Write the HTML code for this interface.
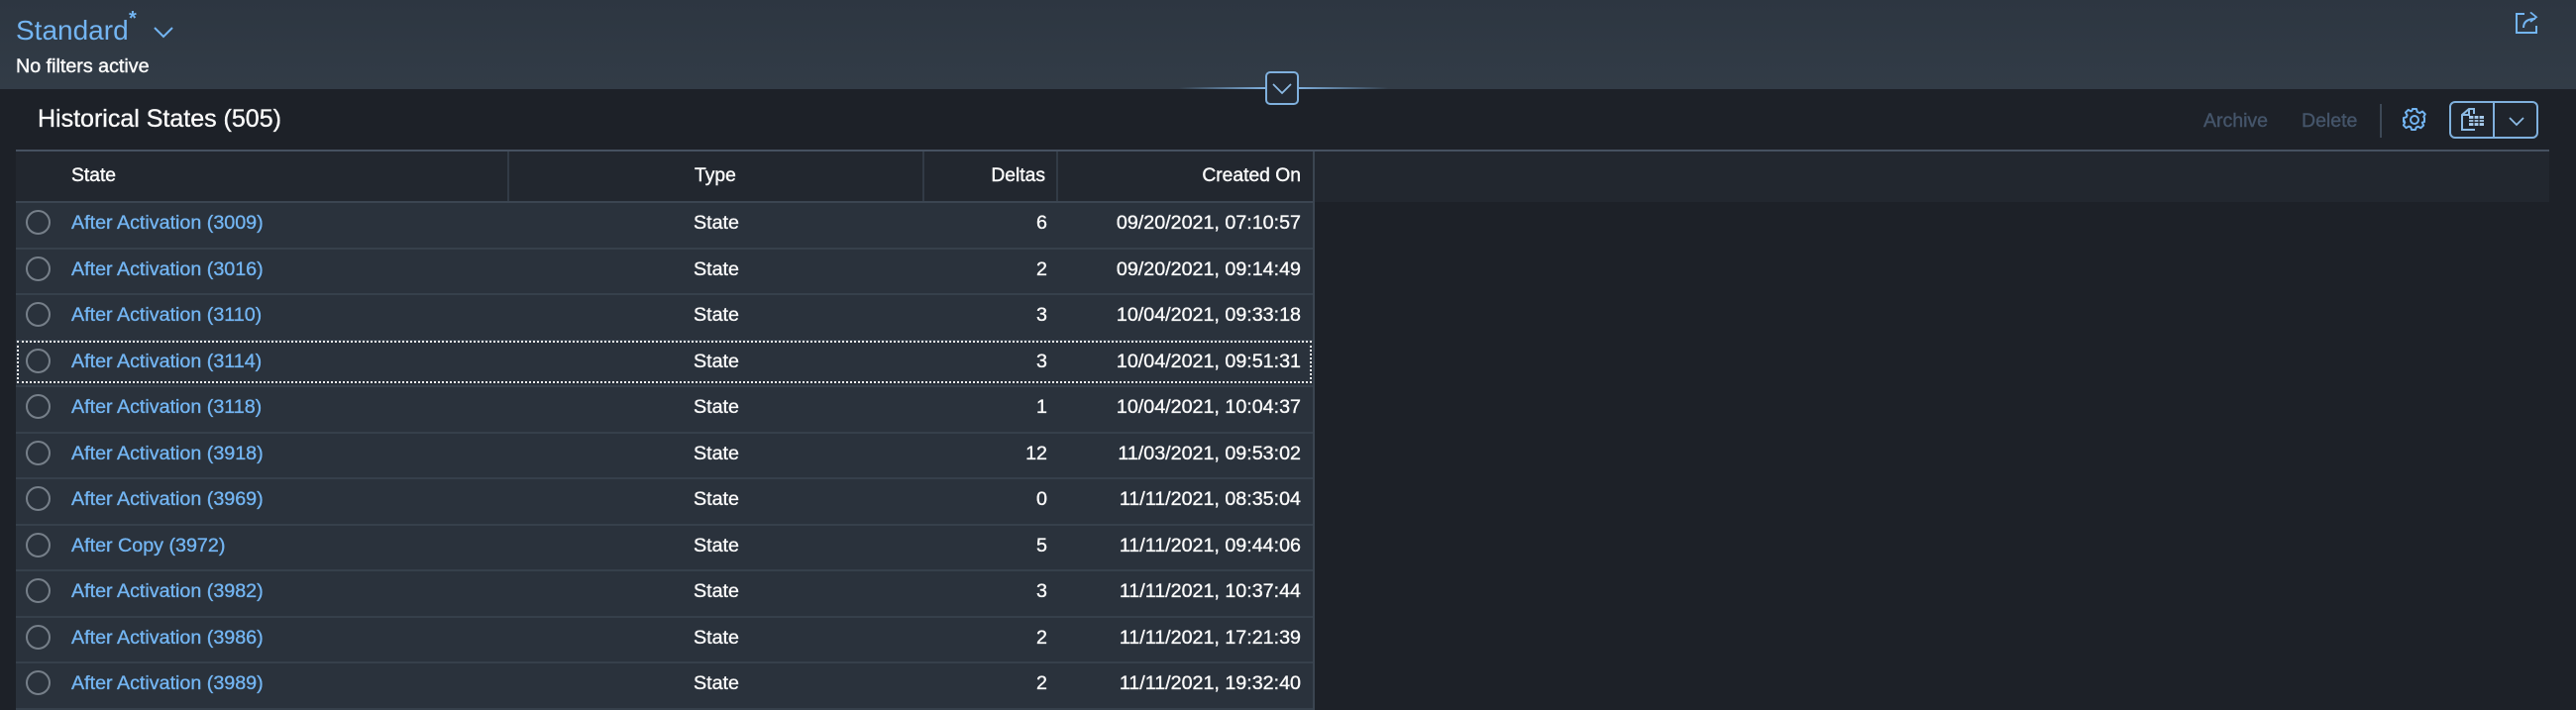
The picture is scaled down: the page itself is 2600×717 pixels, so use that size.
<!DOCTYPE html>
<html><head><meta charset="utf-8"><style>
html,body{margin:0;padding:0;width:2600px;height:717px;overflow:hidden;background:#1d2128;font-family:"Liberation Sans",sans-serif}
.a{position:absolute;white-space:nowrap}
#hdr{left:0;top:0;width:2600px;height:90px;background:linear-gradient(#2d3641,#323c47)}
#bar{left:0;top:90px;width:2600px;height:627px;background:#1d2128}
#hb{left:16px;top:151px;width:2557px;height:53px;background:#22272f;border-top:2px solid #465160;box-sizing:border-box}
#hb3{left:16px;top:203px;width:1309px;height:2px;background:#3b4551}
.sep{position:absolute;top:153px;width:2px;height:50px;background:#323b46}
.th{position:absolute;top:166px;font-size:19.3px;line-height:24px;color:#fafafa;-webkit-text-stroke:.4px #fafafa}
#rows{left:16px;top:205px;width:1309px}
.r{position:relative;height:46.55px;background:#2a323c;border-bottom:2px solid #36404b;box-sizing:border-box;font-size:19.7px;color:#fafafa}
.r span{position:absolute;top:8px;line-height:24px;-webkit-text-stroke:.35px currentColor}
.r .l{left:56px;color:#73b5f2}
.r .t{left:684px}
.r .d{right:268px}
.r .c{right:12px}
.r i{position:absolute;left:10px;top:7px;width:25px;height:25px;border:2px solid #767f89;border-radius:50%;box-sizing:border-box}
#vl{left:1325px;top:153px;width:2px;height:564px;background:#3b4551}
#focus{left:17px;top:344px;width:1307px;height:43px;border:2px dotted #f2f2f2;box-sizing:border-box}
</style></head><body>
<div class="a" id="hdr"></div>
<div class="a" id="bar"></div>
<div class="a" style="left:16px;top:12px;font-size:28px;line-height:38px;color:#73b5f2">Standard</div>
<div class="a" style="left:130px;top:9px;font-size:20px;line-height:20px;color:#73b5f2;font-weight:bold">*</div>
<svg class="a" style="left:154px;top:24px" width="22" height="16" viewBox="0 0 22 16"><path d="M2 4l9 9 9-9" fill="none" stroke="#73b5f2" stroke-width="2"/></svg>
<div class="a" style="left:16px;top:55px;font-size:19.7px;line-height:24px;color:#fafafa;-webkit-text-stroke:.4px #fafafa">No filters active</div>
<svg class="a" style="left:2536px;top:10px" width="28" height="28" viewBox="0 0 28 28" fill="none" stroke="#73b5f2" stroke-width="2"><path d="M12 4H4v19h20v-7"/><path d="M11 18c0-6 4-9 12-9" /><path d="M19 3l6 6-6 6" transform="translate(-1 0) scale(1 .8)"/></svg>

<div class="a" style="left:1190px;top:88px;width:87px;height:2px;background:linear-gradient(90deg,rgba(115,170,225,0),#7fb0dd)"></div>
<div class="a" style="left:1311px;top:88px;width:90px;height:2px;background:linear-gradient(270deg,rgba(115,170,225,0),#7fb0dd)"></div>
<div class="a" style="left:1277px;top:72px;width:34px;height:34px;box-sizing:border-box;border:2px solid #7fb0dd;border-radius:5px;background:#242a33"></div>
<svg class="a" style="left:1283px;top:83px" width="22" height="14" viewBox="0 0 22 14"><path d="M2 2l9 9 9-9" fill="none" stroke="#8dbce6" stroke-width="1.700"/></svg>

<div class="a" style="left:38px;top:105px;font-size:25px;line-height:30px;color:#fafafa;-webkit-text-stroke:.35px #fafafa">Historical States (505)</div>
<div class="a" style="left:2224px;top:110px;font-size:19.5px;line-height:24px;color:#45556a;-webkit-text-stroke:.4px #45556a">Archive</div>
<div class="a" style="left:2323px;top:110px;font-size:19.5px;line-height:24px;color:#45556a;-webkit-text-stroke:.4px #45556a">Delete</div>
<div class="a" style="left:2402px;top:105px;width:2px;height:34px;background:#3d4856"></div>
<svg class="a" style="left:2424px;top:108px" width="26" height="26" viewBox="0 0 26 26" fill="none" stroke="#73b5f2" stroke-width="2"><circle cx="13" cy="13" r="4"/><path d="M11 2h4l.7 3 2.6 1.100 2.700-1.600 2.800 2.800-1.600 2.700L23 11v4l-2.200.7 1.300 2.900-2.700 2.600-2.800-1.400-1.900.8-.7 2.400h-4l-.7-2.600-2-.8-2.800 1.500-2.600-2.700 1.400-2.700-.8-2L2 15v-4l2.800-.7.8-2L4 5.600l2.700-2.700 2.700 1.500 1-.5z" stroke-linejoin="round"/></svg>
<div class="a" style="left:2472px;top:102px;width:90px;height:38px;box-sizing:border-box;border:2px solid #7fb0dd;border-radius:6px;background:#1f242c"></div>
<div class="a" style="left:2516px;top:103px;width:2px;height:36px;background:#7fb0dd"></div>
<svg class="a" style="left:2482px;top:108px" width="26" height="26" viewBox="0 0 26 26" fill="none" stroke="#8dbce6" stroke-width="2"><path d="M15 7V2h-5L3 8v15h13"/><path d="M10 2v6H3"/><rect x="10" y="9" width="15" height="10" fill="#a9cdef" stroke="none"/><path d="M10 12.500h15M10 15.500h15M15 9v10M20 9v10" stroke="#1f242c" stroke-width="1.200"/></svg>
<svg class="a" style="left:2530px;top:117px" width="20" height="12" viewBox="0 0 20 12"><path d="M3 2l7 7 7-7" fill="none" stroke="#8dbce6" stroke-width="1.700"/></svg>

<div class="a" id="hb"></div>
<div class="a" id="hb3"></div>
<div class="sep" style="left:512px"></div>
<div class="sep" style="left:931px"></div>
<div class="sep" style="left:1066px"></div>
<div class="th" style="left:72px">State</div>
<div class="th" style="left:701px">Type</div>
<div class="th" style="right:1545px">Deltas</div>
<div class="th" style="right:1287px">Created On</div>

<div class="a" id="rows">
<div class="r"><i></i><span class="l">After Activation (3009)</span><span class="t">State</span><span class="d">6</span><span class="c">09/20/2021, 07:10:57</span></div>
<div class="r"><i></i><span class="l">After Activation (3016)</span><span class="t">State</span><span class="d">2</span><span class="c">09/20/2021, 09:14:49</span></div>
<div class="r"><i></i><span class="l">After Activation (3110)</span><span class="t">State</span><span class="d">3</span><span class="c">10/04/2021, 09:33:18</span></div>
<div class="r"><i></i><span class="l">After Activation (3114)</span><span class="t">State</span><span class="d">3</span><span class="c">10/04/2021, 09:51:31</span></div>
<div class="r"><i></i><span class="l">After Activation (3118)</span><span class="t">State</span><span class="d">1</span><span class="c">10/04/2021, 10:04:37</span></div>
<div class="r"><i></i><span class="l">After Activation (3918)</span><span class="t">State</span><span class="d">12</span><span class="c">11/03/2021, 09:53:02</span></div>
<div class="r"><i></i><span class="l">After Activation (3969)</span><span class="t">State</span><span class="d">0</span><span class="c">11/11/2021, 08:35:04</span></div>
<div class="r"><i></i><span class="l">After Copy (3972)</span><span class="t">State</span><span class="d">5</span><span class="c">11/11/2021, 09:44:06</span></div>
<div class="r"><i></i><span class="l">After Activation (3982)</span><span class="t">State</span><span class="d">3</span><span class="c">11/11/2021, 10:37:44</span></div>
<div class="r"><i></i><span class="l">After Activation (3986)</span><span class="t">State</span><span class="d">2</span><span class="c">11/11/2021, 17:21:39</span></div>
<div class="r"><i></i><span class="l">After Activation (3989)</span><span class="t">State</span><span class="d">2</span><span class="c">11/11/2021, 19:32:40</span></div>
</div>
<div class="a" id="vl"></div>
<div class="a" id="focus"></div>
</body></html>
